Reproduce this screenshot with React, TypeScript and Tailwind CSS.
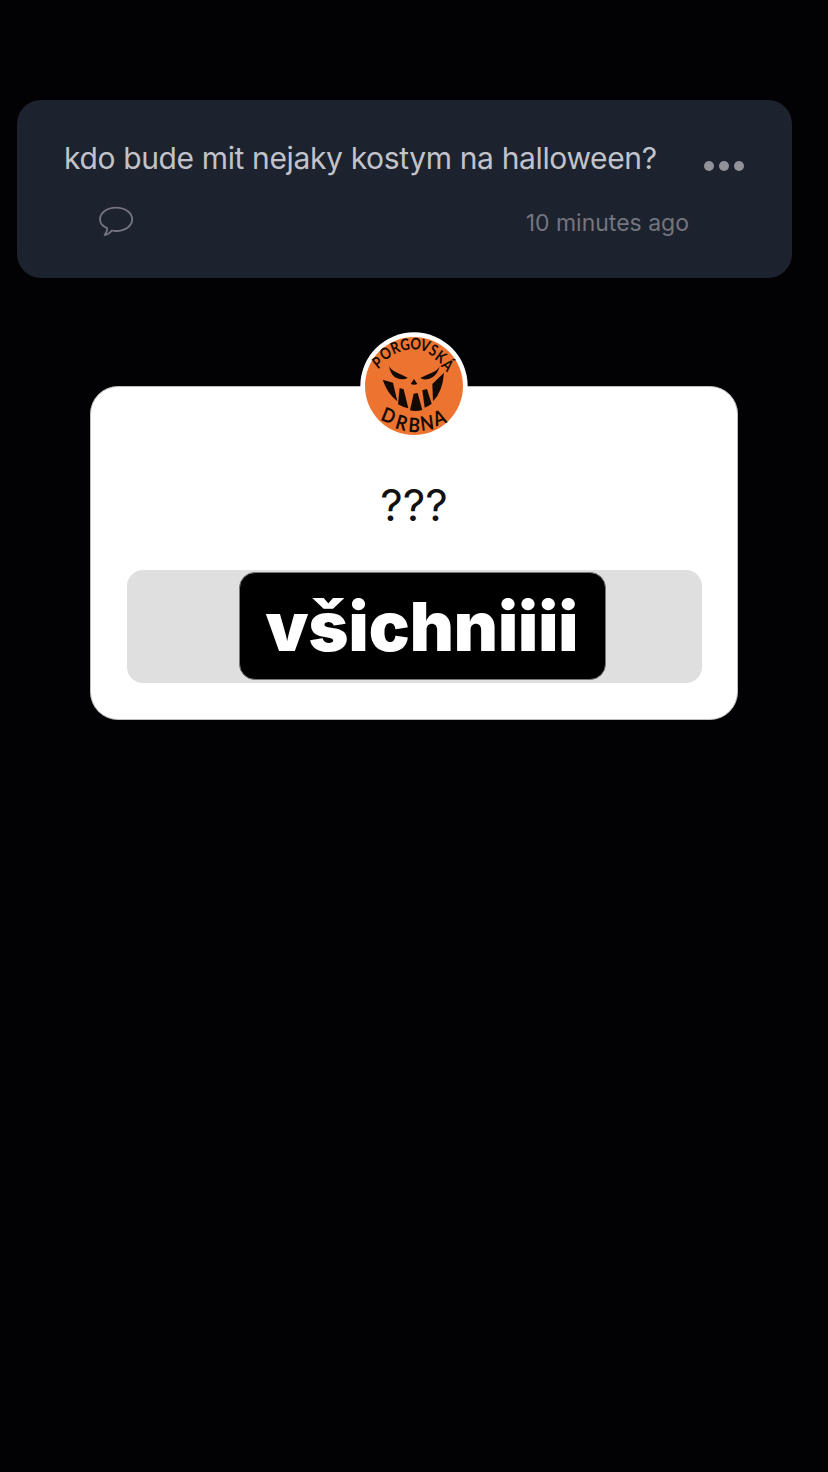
type Letter = { c: string; x: number; y: number; r: number };

const topLetters: Letter[] = [
  { c: "P", x: 70, y: 109, r: -38 },
  { c: "O", x: 94, y: 82, r: -32 },
  { c: "R", x: 123, y: 65, r: -22 },
  { c: "G", x: 153, y: 55, r: -8 },
  { c: "O", x: 185, y: 53, r: 4 },
  { c: "V", x: 214, y: 58, r: 18 },
  { c: "S", x: 239, y: 72, r: 28 },
  { c: "K", x: 261, y: 92, r: 36 },
  { c: "Á", x: 281, y: 117, r: 44 },
];

const bottomLetters: Letter[] = [
  { c: "D", x: 104, y: 269, r: 22 },
  { c: "R", x: 143, y: 290, r: 16 },
  { c: "B", x: 181, y: 297, r: 4 },
  { c: "N", x: 219, y: 291, r: -8 },
  { c: "A", x: 256, y: 275, r: -20 },
];

function Lettering({ letters, size, sx }: { letters: Letter[]; size: number; sx: number }) {
  return (
    <>
      {letters.map((l, i) => (
        <text
          key={i}
          transform={`translate(${l.x} ${l.y}) rotate(${l.r}) scale(${sx} 1)`}
          y={size * 0.36}
          fontSize={size}
          textAnchor="middle"
          className="font-['Lato'] font-bold"
          fill="#160b05"
        >
          {l.c}
        </text>
      ))}
    </>
  );
}

function Avatar() {
  return (
    <svg viewBox="18 18 324 324" className="size-[108px]">
      <circle cx="180" cy="180" r="161" fill="#fff" />
      <circle cx="180" cy="180" r="147" fill="#ed7430" />
      <Lettering letters={topLetters} size={48} sx={0.82} />
      <Lettering letters={bottomLetters} size={60} sx={0.88} />
      <g fill="#140a04">
        <path d="M105 120 C112 137 137 142 161 155 C148 164 112 164 105 120Z" />
        <path d="M257 121 C251 137 224 143 199 156 C210 165 247 163 257 121Z" />
        <path d="M180 159 L190 174 Q181 178 170 174Z" />
        <path d="M86 161 L117 170 L130 226 Q99 201 86 161Z" />
        <path d="M137 186 L149 190 L163 247 Q147 244 132 235Z" />
        <path d="M179 203 L191 201 L205 252 Q186 257 168 253Z" />
        <path d="M205 193 L219 189 L233 233 Q223 241 212 245Z" />
        <path d="M270 140 L235 174 L237 226 Q266 197 270 140Z" />
      </g>
    </svg>
  );
}

function CommentIcon() {
  return (
    <svg viewBox="0 0 36 32" className="-mt-[2px] h-8 w-9" fill="none" stroke="#74757f" strokeWidth="1.8" strokeLinejoin="round">
      <path d="M9.2 23.2 C4.5 21.4 2 18 2 14.3 C2 7.6 9 2.6 18 2.6 C27 2.6 34.2 7.6 34.2 14.3 C34.2 21.2 27 26 18 26 Q15.6 26 13.8 25.5 Q11.2 29.2 6.6 30 Q9.4 27 9.2 23.2Z" />
    </svg>
  );
}

export default function App() {
  return (
    <main className="flex h-[1472px] w-[828px] flex-col overflow-hidden bg-[#020204] pt-[100px] font-['Inter',sans-serif]">
      <section className="ml-[17px] flex h-[178px] w-[775px] flex-col rounded-[24px] bg-[#1c222e] pr-12 pl-[47px]">
        <div className="mt-[38px] flex h-10 items-center justify-between">
          <h1 className="text-[30px] leading-10 tracking-[-0.36px] whitespace-nowrap text-[#c2c2ca]">
            kdo bude mit nejaky kostym na halloween?
          </h1>
          <div className="mt-4 flex gap-[5px]">
            <span className="size-[10px] rounded-full bg-[#92929a]" />
            <span className="size-[10px] rounded-full bg-[#92929a]" />
            <span className="size-[10px] rounded-full bg-[#92929a]" />
          </div>
        </div>
        <div className="mt-[27px] flex items-center justify-between pr-[55px] pl-[34px]">
          <CommentIcon />
          <time className="mt-[2px] text-[23px] leading-8 whitespace-nowrap text-[#74757f]">10 minutes ago</time>
        </div>
      </section>

      <section className="mt-[108px] ml-[90px] flex h-[334px] w-[648px] flex-col items-center rounded-[28px] border border-[#bdbdbd] bg-white">
        <div className="-mt-[55px] h-[108px]">
          <Avatar />
        </div>
        <p className="mt-[35px] h-[60px] text-[44px] leading-[60px] text-[#111]">???</p>
        <div className="mt-[35px] flex h-[113px] w-[575px] justify-center rounded-[16px] bg-[#dfdfdf] pt-[2px] pl-4">
          <div className="flex h-[108px] w-[367px] items-center justify-center rounded-[16px] border border-[#777] bg-black text-[68px] leading-[108px] font-black text-white">
            <span className="whitespace-nowrap">všichniiii</span>
          </div>
        </div>
      </section>
    </main>
  );
}
